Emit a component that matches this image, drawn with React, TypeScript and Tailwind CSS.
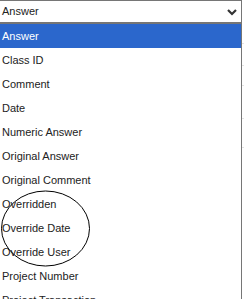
import { Fragment } from "react";

const options = [
  "Answer",
  "Class ID",
  "Comment",
  "Date",
  "Numeric Answer",
  "Original Answer",
  "Original Comment",
  "Overridden",
  "Override Date",
  "Override User",
  "Project Number",
  "Project Transaction",
];

export default function App() {
  const selected = "Answer";

  return (
    <div className="relative w-[244px] h-[299px] overflow-hidden bg-white flex items-start font-['Liberation_Sans',Arial,sans-serif] text-[11px] text-[#222]">
      {/* select + open list */}
      <div className="w-[242px] flex flex-col shrink-0">
        <div className="h-[23px] shrink-0 flex items-center justify-between border-t border-r border-b border-[#767676] pl-[2px] pr-[4px]">
          <span className="leading-none">{selected}</span>
          <svg width="10" height="7" viewBox="0 0 10 7" className="mt-[1px]">
            <polyline points="1,1 5,5 9,1" fill="none" stroke="#333" strokeWidth="2.2" />
          </svg>
        </div>
        <ul className="border-t border-r border-[#767676] shrink-0">
          {options.map((o) => (
            <li
              key={o}
              className={`h-[24px] flex items-center pl-[2px] ${
                o === selected ? "bg-[#2b67cc] text-white" : ""
              }`}
            >
              {o}
            </li>
          ))}
        </ul>
      </div>

      {/* page behind the list */}
      <div className="flex-1 flex flex-col">
        {[43, 21, 19, 32, 28].map((h, i) => (
          <Fragment key={i}>
            <div style={{ height: h }} />
            <div className="h-px bg-[#e3e3e3]" />
          </Fragment>
        ))}
      </div>

      {/* hand drawn circle */}
      <svg className="absolute left-0 top-0 pointer-events-none" width="244" height="299">
        <ellipse cx="45.5" cy="228.5" rx="44" ry="37.5" fill="none" stroke="#000" strokeWidth="1" />
      </svg>
    </div>
  );
}
